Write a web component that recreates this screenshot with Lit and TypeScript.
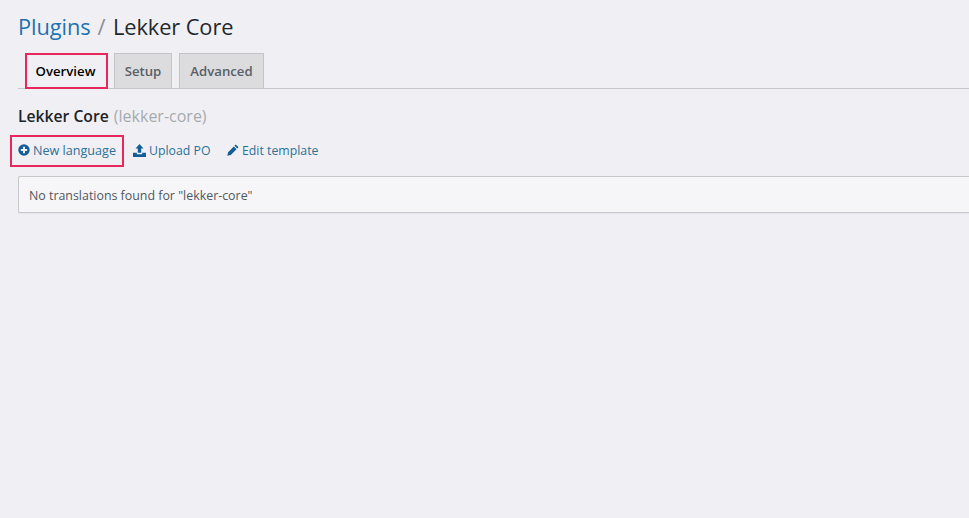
import { LitElement, html, css } from "lit";
import { customElement } from "lit/decorators.js";

@customElement("app-root")
export class AppRoot extends LitElement {
  static styles = css`
    :host {
      display: block;
      height: 518px;
      overflow: hidden;
      background: #f0f0f4;
      font-family: "Open Sans", "Noto Sans", sans-serif;
      color: #23282d;
      padding-left: 18px;
      box-sizing: border-box;
    }
    h1 {
      margin: 0;
      padding-top: 12px;
      height: 53px;
      box-sizing: border-box;
      font-size: 21.8px;
      line-height: 30px;
      font-weight: 400;
      letter-spacing: -0.08px;
      white-space: nowrap;
    }
    h1 a { color: #2271b1; }
    h1 .sep { color: #8c8f94; padding: 0 7.5px 0 7px; }
    .tabs {
      display: flex;
      gap: 7px;
      height: 36px;
      box-sizing: border-box;
      padding-left: 7px;
      border-bottom: 1px solid #c8c8cc;
    }
    .tab {
      height: 35px;
      box-sizing: border-box;
      display: flex;
      align-items: center;
      justify-content: center;
      font-size: 13.2px;
      font-weight: 600;
      color: #5a6066;
      background: #dcdcde;
      border: 1px solid #c3c4c7;
      border-bottom: 0;
    }
    .tab.setup { width: 58px; margin-left: -1px; }
    .tab.advanced { width: 85px; }
    .tab.active {
      width: 83px;
      padding-right: 2px;
      color: #000;
      background: #f0f0f4;
      border: 2px solid #e8275f;
      height: 36px;
    }
    h2 {
      margin: 0;
      padding-top: 16px;
      height: 50px;
      box-sizing: border-box;
      font-size: 15.7px;
      line-height: 22px;
      font-weight: 600;
      color: #1d2327;
    }
    h2 span { font-weight: 400; font-size: 16px; color: #a7aaad; padding-left: 1px; }
    .actions {
      display: flex;
      align-items: center;
      height: 22px;
      margin-bottom: 15px;
      font-size: 12.3px;
    }
    .actions a { display: flex; align-items: center; gap: 3px; color: #2c7097; white-space: nowrap; }
    .actions svg { fill: #135e96; flex: none; }
    .new {
      position: relative;
      width: 115px;
      font-size: 12.6px;
    }
    .new::before {
      content: "";
      position: absolute;
      left: -8px;
      top: -7px;
      width: 114px;
      height: 32px;
      box-sizing: border-box;
      border: 2px solid #e8275f;
    }
    .upload { width: 94px; }
    .actions a.upload { gap: 3px; }
    .notice {
      height: 37px;
      box-sizing: border-box;
      margin-right: -1px;
      display: flex;
      align-items: center;
      padding: 1px 0 0 10px;
      font-size: 12.4px;
      color: #50575e;
      background: #f6f6f8;
      border: 1px solid #c8c8cc;
      border-right: 0;
      border-radius: 2px 0 0 2px;
      box-shadow: 0 1px 1px rgba(0,0,0,0.04);
    }
  `;

  render() {
    return html`
      <h1><a>Plugins</a><span class="sep">/</span>Lekker Core</h1>
      <div class="tabs">
        <div class="tab active">Overview</div>
        <div class="tab setup">Setup</div>
        <div class="tab advanced">Advanced</div>
      </div>
      <h2>Lekker Core <span>(lekker-core)</span></h2>
      <div class="actions">
        <a class="new">
          <svg width="12" height="12" viewBox="0 0 12 12"><path fill-rule="evenodd" d="M6 .3a5.700 5.700 0 1 0 0 11.400A5.700 5.700 0 0 0 6 .3ZM5 2.800h2V5h2.200v2H7v2.200H5V7H2.800V5H5Z"/></svg>
          New language
        </a>
        <a class="upload">
          <svg width="13" height="13" viewBox="0 0 13 13"><path d="M6.500 0 10.500 4.500H8.200V8.800H4.800V4.500H2.500Z"/><path d="M0 8.800H3.800V10.200H9.200V8.800H13V13H0Z"/></svg>
          Upload PO
        </a>
        <a>
          <svg width="12" height="12" viewBox="0 0 12 12"><path d="M8.800 .5 11.500 3.200 10.200 4.500 7.500 1.800ZM6.800 2.500 9.500 5.200 3.800 10.900 0.300 11.700 1.100 8.200Z"/></svg>
          Edit template
        </a>
      </div>
      <div class="notice">No translations found for "lekker-core"</div>
    `;
  }
}
